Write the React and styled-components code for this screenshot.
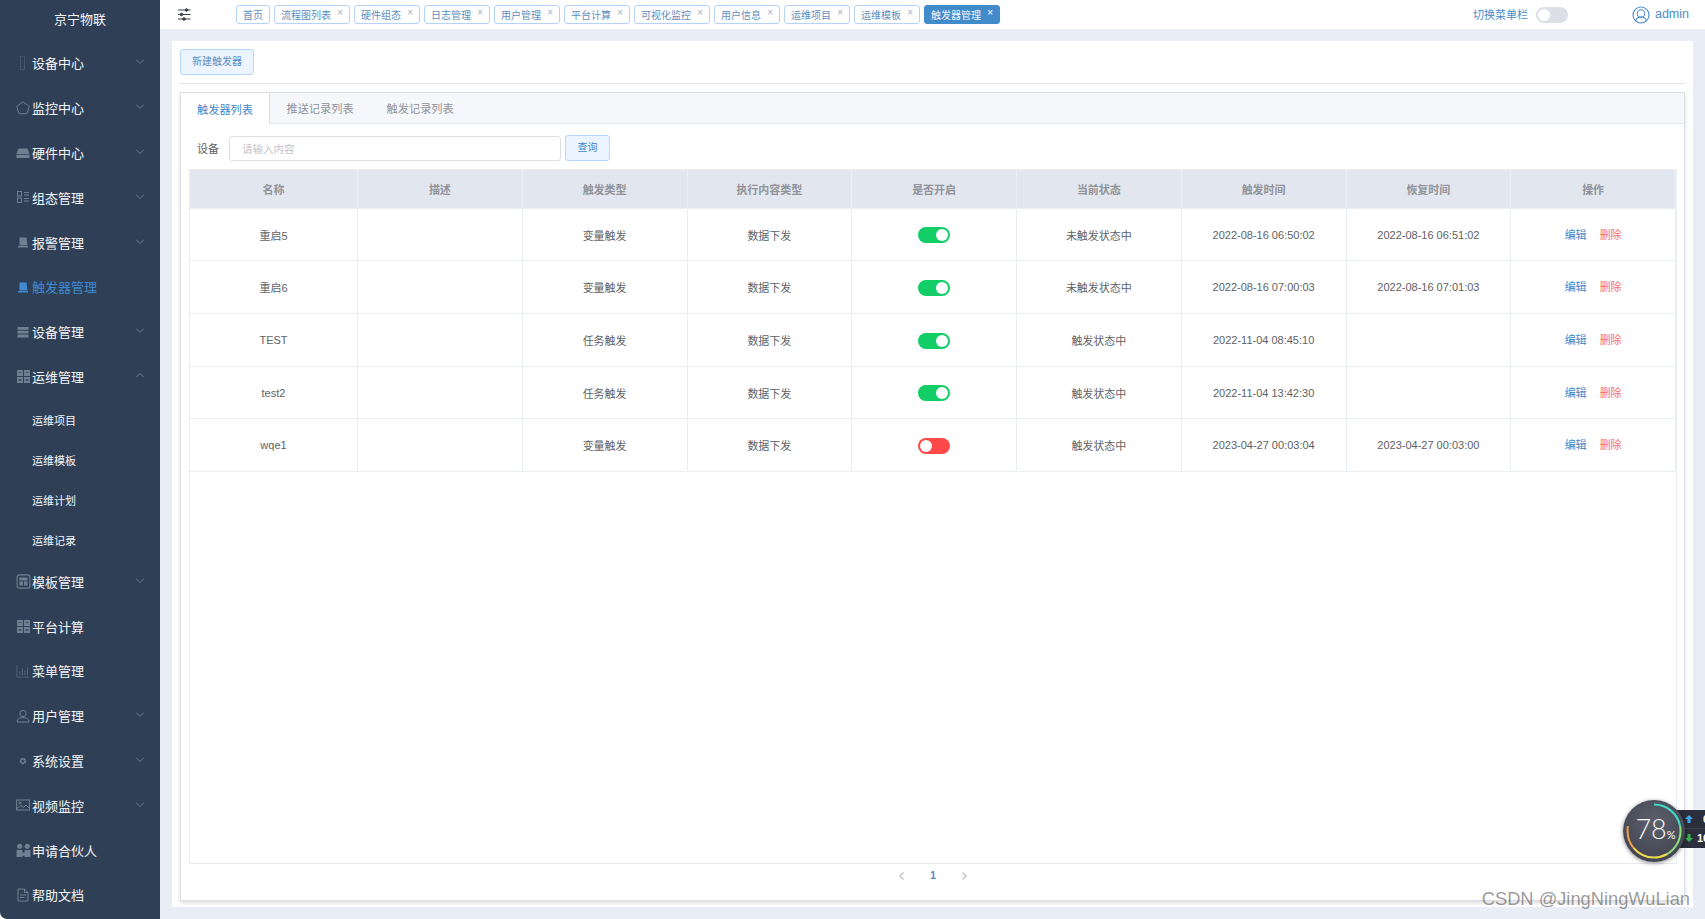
import React from "react";
import styled, { createGlobalStyle } from "styled-components";

const GlobalStyle = createGlobalStyle`
  html, body, #root {
    margin: 0;
    height: 100%;
    overflow: hidden;
    background: #fff;
  }
  * {
    box-sizing: border-box;
  }
  body {
    font-family: "Liberation Sans", "Noto Sans CJK SC", sans-serif;
  }
`;

const Page = styled.div`
  display: flex;
  height: 100vh;
  position: relative;
`;

const Sidebar = styled.aside`
  width: 160px;
  flex: none;
  background: #2f4056;
  border-bottom-left-radius: 7px;
  overflow: hidden;
`;

const Logo = styled.div`
  height: 41.6px;
  padding-bottom: 5px;
  display: flex;
  align-items: center;
  justify-content: center;
  color: #f2f4f7;
  font-size: 13px;
`;

const MenuItem = styled.div`
  height: 44.8px;
  display: flex;
  align-items: center;
  padding: 0 16px 2px 16px;
  font-size: 13px;
  color: ${(p) => (p.$active ? "#3f89d0" : "#f4f6f8")};
`;

const SubItem = styled.div`
  height: 40px;
  display: flex;
  align-items: center;
  padding-left: 32px;
  font-size: 11px;
  color: #f4f6f8;
`;

const IconSlot = styled.span`
  width: 16px;
  height: 16px;
  flex: none;
  display: flex;
  align-items: center;
  justify-content: flex-start;
  color: ${(p) => (p.$active ? "#3f89d0" : "#717f92")};
`;

const Chevron = styled.svg`
  width: 8px;
  height: 5px;
  margin-left: auto;
  margin-bottom: 2px;
  fill: none;
  stroke: #6e7c90;
  stroke-width: 1;
`;

const Main = styled.div`
  flex: 1;
  min-width: 0;
  display: flex;
  flex-direction: column;
  background: #e9edf5;
`;

const TopBar = styled.header`
  height: 29px;
  flex: none;
  background: #fff;
  display: flex;
  align-items: center;
  padding: 0 16px 0 18px;
`;

const TagList = styled.div`
  display: flex;
  gap: 4px;
  margin-left: 45px;
`;

const Tag = styled.div`
  height: 19px;
  display: flex;
  align-items: center;
  padding: 0 6px 1px;
  border: 1px solid ${(p) => (p.$active ? "#428bca" : "#b3d4f5")};
  border-radius: 3px;
  background: ${(p) => (p.$active ? "#428bca" : "#fff")};
  color: ${(p) => (p.$active ? "#eef5fb" : "#5f8dbd")};
  font-size: 10px;
  white-space: nowrap;
`;

const TagClose = styled.span`
  width: 12px;
  text-align: right;
  padding-bottom: 3px;
  font-size: 10px;
  color: ${(p) => (p.$active ? "#fff" : "#a4aec4")};
`;

const TopRight = styled.div`
  margin-left: auto;
  display: flex;
  align-items: center;
  color: #4a8cca;
`;

const ToggleLabel = styled.span`
  font-size: 11px;
  margin: 0 8px 2px 0;
`;

const UserName = styled.span`
  font-size: 12.5px;
  margin: 0 0 2px 5px;
`;

const UserIcon = styled.svg`
  width: 18px;
  height: 18px;
  margin-left: 64px;
  fill: none;
  stroke: #4a8cca;
  stroke-width: 1.1;
`;

const Switch = styled.span`
  display: block;
  position: relative;
  width: 32px;
  height: 16px;
  flex: none;
  border-radius: 8px;
  background: ${(p) => p.$color};

  &::after {
    content: "";
    position: absolute;
    top: 2px;
    left: ${(p) => (p.$on ? "18px" : "2px")};
    width: 12px;
    height: 12px;
    border-radius: 50%;
    background: #fff;
  }
`;

const Content = styled.main`
  flex: 1;
  min-height: 0;
  margin: 12px;
  background: #fff;
  padding: 8px 8px 6px 8px;
  display: flex;
  flex-direction: column;
`;

const LightButton = styled.button`
  all: unset;
  box-sizing: border-box;
  width: ${(p) => p.$width}px;
  height: 26px;
  flex: none;
  text-align: center;
  line-height: 24px;
  font-size: 10px;
  color: ${(p) => p.$color};
  background: #ecf5ff;
  border: 1px solid #b3d8ff;
  border-radius: 3px;
`;

const Divider = styled.div`
  height: 1px;
  flex: none;
  margin: 8px 0;
  background: #e4e6ea;
`;

const TabCard = styled.section`
  flex: 1;
  min-height: 0;
  display: flex;
  flex-direction: column;
  border: 1px solid #dcdfe6;
  box-shadow: 0 2px 4px rgba(0, 0, 0, 0.14);
`;

const TabHeader = styled.div`
  height: 31px;
  flex: none;
  display: flex;
  background: #f5f7fa;
  border-bottom: 1px solid #e4e7ed;
`;

const TabLabel = styled.div`
  display: flex;
  align-items: center;
  font-size: 11.2px;
  height: ${(p) => (p.$active ? "31px" : "30px")};
  padding: 0 ${(p) => (p.$active ? "16px" : "16.5px")};
  color: ${(p) => (p.$active ? "#3f87c9" : "#909399")};
  background: ${(p) => (p.$active ? "#fff" : "transparent")};
  border-right: ${(p) => (p.$active ? "1px solid #dcdfe6" : "none")};
`;

const TabBody = styled.div`
  flex: 1;
  min-height: 0;
  display: flex;
  flex-direction: column;
  padding: 11px 7px 0 8px;
`;

const SearchRow = styled.div`
  display: flex;
  align-items: center;
  height: 26px;
  flex: none;
  margin-bottom: 8px;
  padding-left: 8px;
`;

const SearchLabel = styled.span`
  font-size: 11px;
  color: #606266;
  margin-right: 10px;
`;

const SearchInput = styled.input`
  width: 332px;
  height: 25px;
  margin: 1px 4px 0 0;
  padding: 0 12px;
  font: inherit;
  font-size: 10.5px;
  border: 1px solid #dcdfe6;
  border-radius: 3px;
  outline: none;

  &::placeholder {
    color: #c0c4cc;
  }
`;

const TableFrame = styled.div`
  flex: 1;
  min-height: 0;
  border-right: 1px solid #ebeef5;
  border-bottom: 1px solid #e8eaee;
  box-shadow: inset 1px 0 0 #ebeef5;
`;

const Table = styled.table`
  width: 100%;
  table-layout: fixed;
  border-collapse: collapse;
  font-size: 11px;
  text-align: center;
`;

const HeadCell = styled.th`
  height: 39px;
  padding: 0;
  font-weight: bold;
  color: #909399;
  background: #e2e6ee;
  border: 1px solid #ebeef5;
  width: ${(p) => (p.$wide ? "168px" : "auto")};
`;

const Row = styled.tr`
  height: ${(p) => p.$height}px;
`;

const Cell = styled.td`
  padding: 0;
  color: #606266;
  border: 1px solid #ebeef5;
`;

const SwitchWrap = styled.div`
  display: flex;
  justify-content: center;
  padding-top: 1px;
`;

const Actions = styled.div`
  display: flex;
  justify-content: center;
  gap: 13px;
  padding-bottom: 2px;
`;

const ActionLink = styled.span`
  color: ${(p) => (p.$danger ? "#f56c6c" : "#3f87c9")};
`;

const Pager = styled.div`
  height: 36px;
  flex: none;
  padding-top: 2px;
  display: flex;
  justify-content: center;
  align-items: flex-start;
  gap: 24px;
  line-height: 20px;
`;

const PagerArrow = styled.svg`
  width: 7px;
  height: 20px;
  fill: none;
  stroke: #c0c4cc;
  stroke-width: 1.5;
`;

const PagerNumber = styled.span`
  width: 8px;
  text-align: center;
  font-size: 10px;
  font-weight: bold;
  color: #3f87c9;
`;

const Gauge = styled.div`
  position: absolute;
  left: 1623px;
  top: 800px;
  width: 62px;
  height: 62px;
  border-radius: 50%;
  background: radial-gradient(circle at 50% 35%, #5c606c, #3b3e4a);
  box-shadow: 0 1px 4px rgba(0, 0, 0, 0.45);
  display: flex;
  align-items: baseline;
  justify-content: center;
  padding: 13px 0 0 3px;
  color: #f8f9fa;
  font-family: "Lato", "Liberation Sans", sans-serif;
  font-weight: 300;
  font-size: 27px;
  line-height: 32px;
`;

const GaugeRing = styled.svg`
  position: absolute;
  inset: 0;
  fill: none;
  stroke-width: 2;
`;

const GaugeUnit = styled.span`
  font-size: 11px;
  font-weight: 400;
  line-height: 10px;
`;

const SpeedPill = styled.div`
  position: absolute;
  left: 1675px;
  top: 810px;
  width: 30px;
  height: 38px;
  background: #2b2f3c;
  overflow: hidden;
`;

const SpeedRow = styled.div`
  height: 19px;
  display: flex;
  align-items: center;
  padding-left: 10px;
  gap: ${(p) => p.$gap}px;
  color: #fff;
  font-size: 11px;
  font-weight: bold;
  white-space: nowrap;
  border-bottom: 1px solid ${(p) => (p.$split ? "#3c4150" : "transparent")};
`;

const SpeedArrow = styled.svg`
  width: 8px;
  height: 8px;
  flex: none;
  fill: ${(p) => p.$color};
`;

const Watermark = styled.div`
  position: absolute;
  right: 15px;
  bottom: 10px;
  font-size: 18.3px;
  line-height: 20px;
  color: rgba(70, 70, 70, 0.55);
`;

const Glyph = ({ children, size = 14, fill = "none", stroke = "currentColor" }) => (
  <svg width={size} height={size} viewBox="0 0 14 14" fill={fill} stroke={stroke}>
    {children}
  </svg>
);

const icons = {
  device: (
    <Glyph>
      <rect x="4.5" y="0" width="4" height="13.5" stroke="#43566d" />
    </Glyph>
  ),
  monitor: (
    <Glyph>
      <path d="M7 .8 13.3 5.4 10.9 12.7H3.1L.7 5.4Z" />
    </Glyph>
  ),
  hardware: (
    <Glyph fill="currentColor" stroke="none">
      <path d="M2.5 2.5h9L13.5 8h-13ZM.5 8.8h13V12H.5Z" />
    </Glyph>
  ),
  scene: (
    <Glyph>
      <rect x="1.5" y="1.5" width="4" height="4.5" />
      <rect x="1.5" y="8" width="4" height="4.5" />
      <path d="M8 2.5h5M8 5h5M8 8.5h5M8 11h5" />
    </Glyph>
  ),
  alarm: (
    <Glyph fill="currentColor" stroke="none">
      <path d="M3.5 2.5 10.5 2.5 11.5 10.5H3.5ZM2 11h10v1.5H2Z" />
    </Glyph>
  ),
  list: (
    <Glyph fill="currentColor" stroke="none">
      <path d="M1.5 2h11v2.8h-11ZM1.5 5.8h11v2.8h-11ZM1.5 9.6h11v2.8h-11Z" />
    </Glyph>
  ),
  grid: (
    <Glyph fill="currentColor" stroke="none" size={15}>
      <path d="M1 1h5.500v5.500H1ZM7.500 1H13v5.500H7.500ZM1 7.500h5.500V13H1ZM7.500 7.500H13V13H7.500Z" />
      <path d="M2.500 9.500h2.500v1.500h-2.500ZM9 9.500h2.500v1.500H9ZM2.500 3h2.500v.8h-2.500ZM9 3h2.500v.8H9Z" fill="#2f4056" />
    </Glyph>
  ),
  template: (
    <Glyph size={15}>
      <rect x="1" y=".8" width="12" height="12.400" rx="2" />
      <path d="M3.200 3.200h7.600V6H3.200ZM3.200 7h3.200v3.800H3.200ZM7.400 7h3.400v3.800H7.400Z" fill="currentColor" stroke="none" />
    </Glyph>
  ),
  chart: (
    <Glyph>
      <path d="M1 1v12h12M4 11V7M6.500 11V4.500M9 11V6.500M11.500 11V3.500" stroke="#54677e" strokeWidth=".9" />
    </Glyph>
  ),
  user: (
    <Glyph>
      <circle cx="7" cy="4.500" r="3.200" />
      <path d="M1 13c0-3 2.500-4.400 6-4.400s6 1.400 6 4.400Z" />
    </Glyph>
  ),
  gear: (
    <Glyph>
      <circle cx="7" cy="7" r="2.300" strokeWidth="2" strokeDasharray="2 .5" />
    </Glyph>
  ),
  image: (
    <Glyph>
      <rect x=".6" y="2" width="12.800" height="10" />
      <circle cx="4" cy="5" r="1" />
      <path d="M1 10.500 5 7.500l2.500 2L10 7l3 3" />
    </Glyph>
  ),
  people: (
    <Glyph fill="currentColor" stroke="none" size={15}>
      <circle cx="3.500" cy="3" r="2.400" />
      <circle cx="10.500" cy="3" r="2.400" />
      <path d="M.5 6.500h5.500v6.500H.5ZM8 6.500h5.500V13H8ZM6 9h2v3H6Z" />
    </Glyph>
  ),
  doc: (
    <Glyph>
      <path d="M2 1h6.500L12 4.500V13H2ZM8.500 1v3.500H12M4 7h6M4 9.500h4.500" />
    </Glyph>
  ),
};

const menu = [
  { label: "设备中心", icon: "device", arrow: "down" },
  { label: "监控中心", icon: "monitor", arrow: "down" },
  { label: "硬件中心", icon: "hardware", arrow: "down" },
  { label: "组态管理", icon: "scene", arrow: "down" },
  { label: "报警管理", icon: "alarm", arrow: "down" },
  { label: "触发器管理", icon: "alarm", active: true },
  { label: "设备管理", icon: "list", arrow: "down" },
  {
    label: "运维管理",
    icon: "grid",
    arrow: "up",
    children: ["运维项目", "运维模板", "运维计划", "运维记录"],
  },
  { label: "模板管理", icon: "template", arrow: "down" },
  { label: "平台计算", icon: "grid" },
  { label: "菜单管理", icon: "chart" },
  { label: "用户管理", icon: "user", arrow: "down" },
  { label: "系统设置", icon: "gear", arrow: "down" },
  { label: "视频监控", icon: "image", arrow: "down" },
  { label: "申请合伙人", icon: "people" },
  { label: "帮助文档", icon: "doc" },
];

const tags = [
  "流程图列表",
  "硬件组态",
  "日志管理",
  "用户管理",
  "平台计算",
  "可视化监控",
  "用户信息",
  "运维项目",
  "运维模板",
];

const columns = ["名称", "描述", "触发类型", "执行内容类型", "是否开启", "当前状态", "触发时间", "恢复时间", "操作"];

const rows = [
  { name: "重启5", height: 52, type: "变量触发", on: true, state: "未触发状态中", fired: "2022-08-16 06:50:02", back: "2022-08-16 06:51:02" },
  { name: "重启6", height: 53, type: "变量触发", on: true, state: "未触发状态中", fired: "2022-08-16 07:00:03", back: "2022-08-16 07:01:03" },
  { name: "TEST", height: 53, type: "任务触发", on: true, state: "触发状态中", fired: "2022-11-04 08:45:10", back: "" },
  { name: "test2", height: 52, type: "任务触发", on: true, state: "触发状态中", fired: "2022-11-04 13:42:30", back: "" },
  { name: "wqe1", height: 53, type: "变量触发", on: false, state: "触发状态中", fired: "2023-04-27 00:03:04", back: "2023-04-27 00:03:00" },
];

const ringParts = [
  { color: "#3fdcc8", length: 22, offset: 0 },
  { color: "#8fdc7a", length: 20, offset: -22 },
  { color: "#efdc4e", length: 22, offset: -42 },
  { color: "#f2a04a", length: 14, offset: -64 },
];

const App = () => {
  return (
    <Page>
      <GlobalStyle />
      <Sidebar>
        <Logo>京宁物联</Logo>
        {menu.map((item) => (
          <React.Fragment key={item.label}>
            <MenuItem $active={item.active}>
              <IconSlot $active={item.active}>{icons[item.icon]}</IconSlot>
              {item.label}
              {item.arrow && (
                <Chevron viewBox="0 0 8 5">
                  <path d={item.arrow === "up" ? "M0 4.500 4 .5l4 4" : "M0 .5l4 4 4-4"} />
                </Chevron>
              )}
            </MenuItem>
            {item.children && item.children.map((child) => <SubItem key={child}>{child}</SubItem>)}
          </React.Fragment>
        ))}
      </Sidebar>

      <Main>
        <TopBar>
          <svg width="13" height="13" viewBox="0 0 13 13" stroke="#3a3f48" fill="#3a3f48">
            <path d="M0 2h12.500M0 6.500h12.500M0 11h12.500" strokeWidth="1" />
            <circle cx="8.500" cy="2" r="1.300" />
            <circle cx="3.500" cy="6.500" r="1.300" />
            <circle cx="6" cy="11" r="1.300" />
          </svg>
          <TagList>
            <Tag>首页</Tag>
            {tags.map((tag) => (
              <Tag key={tag}>
                {tag}
                <TagClose>×</TagClose>
              </Tag>
            ))}
            <Tag $active>
              触发器管理
              <TagClose $active>×</TagClose>
            </Tag>
          </TagList>
          <TopRight>
            <ToggleLabel>切换菜单栏</ToggleLabel>
            <Switch $color="#dcdfe6" />
            <UserIcon viewBox="0 0 18 18">
              <circle cx="9" cy="9" r="8" />
              <circle cx="9" cy="7.500" r="3.800" />
              <path d="M3.500 15c.8-2.800 3-4 5.500-4s4.700 1.200 5.500 4" />
            </UserIcon>
            <UserName>admin</UserName>
          </TopRight>
        </TopBar>

        <Content>
          <LightButton $width={74} $color="#5f8dbd">
            新建触发器
          </LightButton>
          <Divider />
          <TabCard>
            <TabHeader>
              <TabLabel $active>触发器列表</TabLabel>
              <TabLabel>推送记录列表</TabLabel>
              <TabLabel>触发记录列表</TabLabel>
            </TabHeader>
            <TabBody>
              <SearchRow>
                <SearchLabel>设备</SearchLabel>
                <SearchInput placeholder="请输入内容" />
                <LightButton $width={45} $color="#3f87c9">
                  查询
                </LightButton>
              </SearchRow>
              <TableFrame>
                <Table>
                  <thead>
                    <tr>
                      {columns.map((col, i) => (
                        <HeadCell key={col} $wide={i === 0}>
                          {col}
                        </HeadCell>
                      ))}
                    </tr>
                  </thead>
                  <tbody>
                    {rows.map((row) => (
                      <Row key={row.name} $height={row.height}>
                        <Cell>{row.name}</Cell>
                        <Cell />
                        <Cell>{row.type}</Cell>
                        <Cell>数据下发</Cell>
                        <Cell>
                          <SwitchWrap>
                            <Switch $on={row.on} $color={row.on ? "#13ce66" : "#ff4949"} />
                          </SwitchWrap>
                        </Cell>
                        <Cell>{row.state}</Cell>
                        <Cell>{row.fired}</Cell>
                        <Cell>{row.back}</Cell>
                        <Cell>
                          <Actions>
                            <ActionLink>编辑</ActionLink>
                            <ActionLink $danger>删除</ActionLink>
                          </Actions>
                        </Cell>
                      </Row>
                    ))}
                  </tbody>
                </Table>
              </TableFrame>
              <Pager>
                <PagerArrow viewBox="0 0 7 20">
                  <path d="M5.500 6.500 2 10l3.500 3.500" />
                </PagerArrow>
                <PagerNumber>1</PagerNumber>
                <PagerArrow viewBox="0 0 7 20">
                  <path d="M1.500 6.500 5 10l-3.500 3.500" />
                </PagerArrow>
              </Pager>
            </TabBody>
          </TabCard>
        </Content>
      </Main>

      <SpeedPill>
        <SpeedRow $split $gap={10}>
          <SpeedArrow viewBox="0 0 8 8" $color="#43a6ea">
            <path d="M4 0 8 4H5.500V8h-3V4H0Z" />
          </SpeedArrow>
          0
        </SpeedRow>
        <SpeedRow $gap={4}>
          <SpeedArrow viewBox="0 0 8 8" $color="#36b24a">
            <path d="M4 8 0 4h2.500V0h3v4H8Z" />
          </SpeedArrow>
          16
        </SpeedRow>
      </SpeedPill>
      <Gauge>
        <GaugeRing viewBox="0 0 62 62">
          {ringParts.map((part) => (
            <circle
              key={part.color}
              cx="31"
              cy="31"
              r="26.500"
              pathLength="100"
              stroke={part.color}
              strokeDasharray={`${part.length} ${100 - part.length}`}
              strokeDashoffset={part.offset}
              transform="rotate(-90 31 31)"
            />
          ))}
        </GaugeRing>
        78
        <GaugeUnit>%</GaugeUnit>
      </Gauge>
      <Watermark>CSDN @JingNingWuLian</Watermark>
    </Page>
  );
};

export default App;
